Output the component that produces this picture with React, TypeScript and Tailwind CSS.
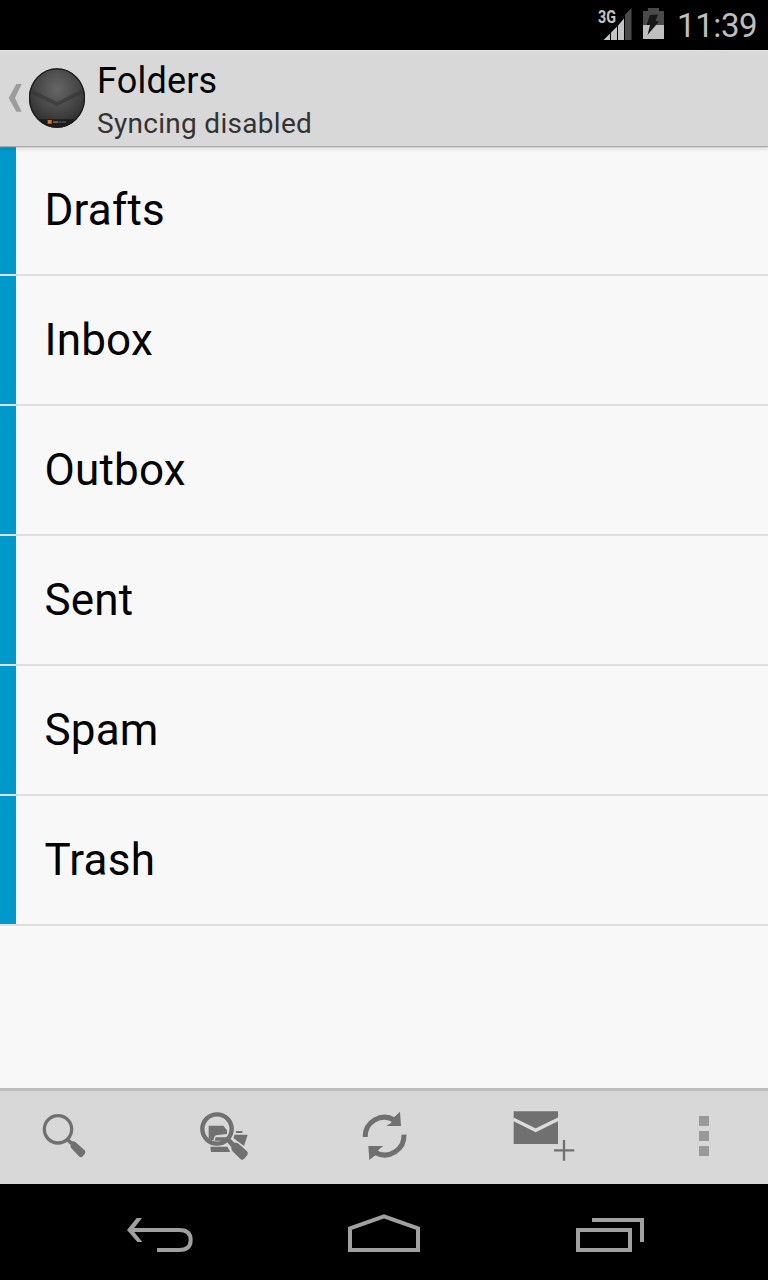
import type { ReactNode } from 'react'

const folders = ['Drafts', 'Inbox', 'Outbox', 'Sent', 'Spam', 'Trash']

function StatusBar() {
  return (
    <div className="flex h-[50px] shrink-0 items-center justify-end bg-black pr-3">
      <svg className="mr-[11px] h-9 w-[34px]" viewBox="0 0 34 36">
        <text
          x="0"
          y="16"
          fill="#c4c4c4"
          fontSize="18"
          fontWeight="700"
          fontFamily="Roboto, sans-serif"
          textLength="18"
          lengthAdjust="spacingAndGlyphs"
        >
          3G
        </text>
        <path d="M27 7.500 33.500 1V33H27Z" fill="#4a4a4a" />
        <path d="M5.500 33 12 26.500V33ZM13 33V25.500L19 19.500V33ZM20 33V18.500L26 11.500V33Z" fill="#c4c4c4" />
      </svg>
      <svg className="mr-[13px] h-9 w-[21px]" viewBox="0 0 21 36">
        <path d="M5 1H16V4H21V18H0V4H5Z" fill="#4a4a4a" />
        <path d="M0 18H21V32H0Z" fill="#c0c0c0" />
        <path d="M7 8 15 7.500 12.500 14 16 14.500 4.500 28 7 18 3.500 18Z" fill="#181818" />
      </svg>
      <span className="w-[79px] whitespace-nowrap pt-px text-[33px] leading-none tracking-[-0.4px] text-[#bebebe]">11:39</span>
    </div>
  )
}

function Avatar() {
  return (
    <svg className="mr-3 h-[60px] w-14" viewBox="87 54 168 180">
      <defs>
        <radialGradient id="ball" cx="0.5" cy="0.35" r="0.6">
          <stop offset="0" stopColor="#666" />
          <stop offset="0.6" stopColor="#484848" />
          <stop offset="1" stopColor="#303030" />
        </radialGradient>
        <clipPath id="ballClip">
          <ellipse cx="171" cy="144" rx="84" ry="89" />
        </clipPath>
      </defs>
      <g clipPath="url(#ballClip)">
        <rect x="87" y="54" width="168" height="180" fill="url(#ball)" />
        <path d="M87 114 171 156 255 114V128L171 168 87 128Z" fill="#333" opacity="0.6" />
        <path d="M110 208H232V234H110Z" fill="#1b1b1b" />
        <path d="M143 210H155V221H143Z" fill="#d8792c" />
        <path d="M159 213H174V219H159Z" fill="#8d5023" />
        <path d="M175 214H198V218H175Z" fill="#44505a" />
      </g>
      <ellipse cx="171" cy="144" rx="82.500" ry="87.500" fill="none" stroke="#1d1d1d" strokeWidth="4" />
    </svg>
  )
}

function Header() {
  return (
    <header className="relative z-10 flex h-24 shrink-0 items-center border-t border-[#e3e3e3] bg-[#d8d8d8] pb-px pl-2 shadow-[0_1px_1px_#a9a9a9,0_3px_4px_rgba(0,0,0,0.12)]">
      <svg className="mr-[7px] h-[30px] w-3.5" viewBox="25 99 42 90">
        <path d="M50 102H66L46 144 66 185H50L27 144Z" fill="#9c9c9c" />
      </svg>
      <Avatar />
      <div className="pt-[7px]">
        <h1 className="text-[36px] leading-[44px] tracking-[0.2px] text-black">Folders</h1>
        <p className="text-[28px] leading-[41px] tracking-[0.3px] text-[#333]">Syncing disabled</p>
      </div>
    </header>
  )
}

function Action({ viewBox, children }: { viewBox: string; children: ReactNode }) {
  return (
    <button className="flex w-32 items-center justify-center">
      <svg className="size-16" viewBox={viewBox} fill="#707070">
        {children}
      </svg>
    </button>
  )
}

function ActionBar() {
  return (
    <div className="flex h-24 shrink-0 justify-between border-t-[3px] border-[#bdbdbd] bg-[#d8d8d8] pb-[3px]">
      <Action viewBox="36 72 192 192">
        <circle cx="114" cy="148" r="41" fill="none" stroke="#707070" strokeWidth="10" />
        <path d="M139 183 147 176 156 184Q162 182 167 187L194 211Q199 216 194 222L187 230Q182 234 177 229L154 205Q150 200 152 195Z" />
      </Action>
      <Action viewBox="36 42 192 192">
        <circle cx="111" cy="117" r="44" fill="none" stroke="#707070" strokeWidth="13" />
        <path d="M86 107H130L141 121V132L108 136Q102 138 101 150H93L86 145Z" />
        <path d="M107 142H144L137 152H104Z" />
        <path d="M91 170H142L151 186H93Z" />
        <path d="M168 123H187V129H168Z" />
        <path d="M163 134H203L192 168 177 157 161 145Z" />
        <path d="M141 156 151 146 163 158Q171 157 177 162L201 184Q206 189 202 195L192 207Q186 212 181 207L157 183Q153 178 154 171Z" />
        <path d="M157 148 165 156Q172 156 178 161L193 174" fill="none" stroke="#d8d8d8" strokeWidth="3" />
      </Action>
      <Action viewBox="36 42 192 192">
        <path d="M75.500 141A58 58 0 0 1 163 90" fill="none" stroke="#707070" strokeWidth="15" />
        <path d="M180 65 183 108H139L153 99 160 84Z" />
        <path d="M192 134A58 58 0 0 1 107 188" fill="none" stroke="#707070" strokeWidth="15" />
        <path d="M85 168H130L117 178 108 194 88 210Z" />
      </Action>
      <Action viewBox="36 42 192 192">
        <path d="M41 64H174V162H41Z" />
        <path d="M40 88 107 121 176 87" fill="none" stroke="#dcdcdc" strokeWidth="10" />
        <path d="M162 177.500H188.500V150H195.500V177.500H223V184.500H195.500V212H188.500V184.500H162Z" />
      </Action>
      <Action viewBox="0 0 64 64">
        <path d="M27 12h10v10H27zM27 27h10v10H27zM27 42h10v10H27z" fill="#999" />
      </Action>
    </div>
  )
}

function NavBar() {
  return (
    <nav className="flex h-24 shrink-0 items-center justify-between bg-black px-[120px]">
      <svg className="h-12 w-20" viewBox="30 39 240 144" fill="none" stroke="#a0a0a0" strokeWidth="12">
        <path d="M62 105H208Q242 105 242 135T208 165H141" />
        <path d="M80 69H96L68 105 97 141H82L51 105Z" fill="#a0a0a0" stroke="none" />
      </svg>
      <svg className="h-12 w-20" viewBox="702 39 240 144" fill="none" stroke="#a0a0a0" strokeWidth="12">
        <path d="M720 165V100L822 64 924 100V165Z" />
      </svg>
      <svg className="h-12 w-20" viewBox="24 39 240 144" fill="none" stroke="#a0a0a0" strokeWidth="12">
        <path d="M54 105H210V165H54Z" />
        <path d="M96 75H246V141" />
      </svg>
    </nav>
  )
}

export default function App() {
  return (
    <div className="flex h-[1280px] w-[768px] flex-col overflow-hidden bg-[#f8f8f8] font-[Roboto,sans-serif]">
      <StatusBar />
      <Header />
      <main className="flex-1">
        {folders.map((name) => (
          <div key={name} className="flex h-[130px] border-b-2 border-[#dedede]">
            <div className="w-4 bg-[#0099cc]" />
            <div className="flex items-center pl-[28.5px] text-[44px] tracking-[0.2px] text-black">{name}</div>
          </div>
        ))}
      </main>
      <ActionBar />
      <NavBar />
    </div>
  )
}
